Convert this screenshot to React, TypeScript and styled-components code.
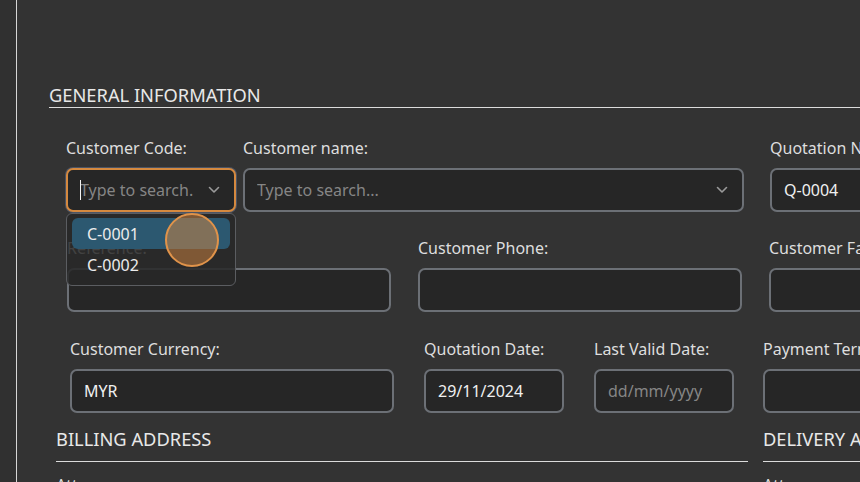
import React from "react"
import styled, { createGlobalStyle } from "styled-components"

const GlobalStyle = createGlobalStyle`
  html, body {
    margin: 0;
    padding: 0;
    background: #333333;
    font-family: "Noto Sans", "Open Sans", sans-serif;
  }
  * { box-sizing: border-box; }
`

const Page = styled.div`
  display: flex;
  width: 860px;
  height: 482px;
  overflow: hidden;
  background: #333333;
`

const SideStrip = styled.div`
  width: 17px;
  flex-shrink: 0;
  background: #303030;
  border-right: 1px solid #d6d6d6;
`

const Main = styled.div`
  flex: 1;
  min-width: 0;
  padding-top: 83px;
  position: relative;
`

const SectionTitle = styled.div<{ indent: number; gap: number }>`
  margin-left: ${({ indent }) => indent}px;
  padding-bottom: ${({ gap }) => gap}px;
  border-bottom: 1px solid #dcdcdc;
  color: #e8e8e8;
  font-size: 18.3px;
  line-height: 24px;
  white-space: nowrap;
`

const Row = styled.div<{ indent: number; top: number }>`
  display: flex;
  margin-left: ${({ indent }) => indent}px;
  margin-top: ${({ top }) => top}px;
`

const Field = styled.div<{ width: number; gap?: number }>`
  display: flex;
  flex-direction: column;
  gap: 10px;
  width: ${({ width }) => width}px;
  flex-shrink: 0;
  margin-right: ${({ gap }) => gap || 0}px;
  position: relative;
`

const Label = styled.div`
  color: #dedede;
  font-size: 16px;
  line-height: 20px;
  white-space: nowrap;
`

const Box = styled.div<{ focused?: boolean }>`
  display: flex;
  align-items: center;
  height: 44px;
  padding: 0 12px 0 12px;
  border-radius: 7px;
  background: #262626;
  border: 2px solid ${({ focused }) => (focused ? "#d5893f" : "#6c7076")};
  box-shadow: ${({ focused }) =>
    focused ? "0 0 0 1px rgba(96, 112, 140, 0.55)" : "none"};
  position: relative;
`

const TextInput = styled.input`
  flex: 1;
  min-width: 0;
  border: none;
  outline: none;
  background: transparent;
  color: #f0f0f0;
  font-family: "Noto Sans", "Open Sans", sans-serif;
  font-size: 16px;
  padding: 0;
  text-overflow: clip;
  &::placeholder {
    color: #858585;
  }
`

const Chevron = styled.svg`
  width: 12px;
  height: 8px;
  flex-shrink: 0;
  margin-left: 14px;
  margin-right: 2px;
`

const Caret = styled.span`
  position: absolute;
  left: 12px;
  top: 10px;
  width: 1px;
  height: 20px;
  background: #f2f2f2;
`

const Dropdown = styled.div`
  position: absolute;
  left: 0;
  top: 75px;
  width: 170px;
  height: 73px;
  padding: 4px 5px 0 5px;
  border: 1px solid #5b5d61;
  border-radius: 6px;
  background: rgba(40, 40, 40, 0.86);
  z-index: 5;
`

const Option = styled.div<{ active?: boolean }>`
  height: 31px;
  padding-left: 15px;
  display: flex;
  align-items: center;
  border-radius: 6px;
  color: #ececec;
  font-size: 16px;
  background: ${({ active }) => (active ? "#2c5870" : "transparent")};
`

const ClickMark = styled.div`
  position: absolute;
  left: 98px;
  top: -1px;
  width: 54px;
  height: 54px;
  border-radius: 50%;
  border: 2px solid #e0934a;
  background: rgba(214, 136, 66, 0.5);
  z-index: 6;
`

const AddressRow = styled.div`
  display: flex;
  margin-top: 14px;
  margin-left: 39px;
`

const AddressCol = styled.div<{ width: number; gap?: number }>`
  width: ${({ width }) => width}px;
  flex-shrink: 0;
  margin-right: ${({ gap }) => gap || 0}px;
`

const SubLabel = styled.div`
  margin-top: 13px;
  color: #dedede;
  font-size: 16px;
  line-height: 20px;
`

const ChevronIcon = () => (
  <Chevron viewBox="0 0 12 8">
    <path
      d="M1.5 1.5 L6 6 L10.5 1.5"
      fill="none"
      stroke="#9a9a9a"
      strokeWidth="1.6"
      strokeLinecap="round"
      strokeLinejoin="round"
    />
  </Chevron>
)

export default function App() {
  return (
    <>
      <GlobalStyle />
      <Page>
        <SideStrip />
        <Main>
          <SectionTitle indent={32} gap={0}>
            GENERAL INFORMATION
          </SectionTitle>

          <Row indent={49} top={30}>
            <Field width={170} gap={7}>
              <Label>Customer Code:</Label>
              <Box focused>
                <Caret />
                <TextInput placeholder="Type to search..." readOnly />
                <ChevronIcon />
              </Box>
              <Dropdown>
                <Option active>C-0001</Option>
                <Option>C-0002</Option>
                <ClickMark />
              </Dropdown>
            </Field>
            <Field width={501} gap={26}>
              <Label>Customer name:</Label>
              <Box>
                <TextInput placeholder="Type to search..." readOnly />
                <ChevronIcon />
              </Box>
            </Field>
            <Field width={220}>
              <Label>Quotation No:</Label>
              <Box>
                <TextInput value="Q-0004" readOnly />
              </Box>
            </Field>
          </Row>

          <Row indent={50} top={26}>
            <Field width={324} gap={27}>
              <Label>Reference:</Label>
              <Box>
                <TextInput readOnly />
              </Box>
            </Field>
            <Field width={324} gap={27}>
              <Label>Customer Phone:</Label>
              <Box>
                <TextInput readOnly />
              </Box>
            </Field>
            <Field width={220}>
              <Label>Customer Fax:</Label>
              <Box>
                <TextInput readOnly />
              </Box>
            </Field>
          </Row>

          <Row indent={53} top={27}>
            <Field width={324} gap={30}>
              <Label>Customer Currency:</Label>
              <Box>
                <TextInput value="MYR" readOnly />
              </Box>
            </Field>
            <Field width={140} gap={30}>
              <Label>Quotation Date:</Label>
              <Box>
                <TextInput value="29/11/2024" readOnly />
              </Box>
            </Field>
            <Field width={140} gap={29}>
              <Label>Last Valid Date:</Label>
              <Box>
                <TextInput placeholder="dd/mm/yyyy" readOnly />
              </Box>
            </Field>
            <Field width={220}>
              <Label>Payment Terms:</Label>
              <Box>
                <TextInput readOnly />
              </Box>
            </Field>
          </Row>

          <AddressRow>
            <AddressCol width={692} gap={15}>
              <SectionTitle indent={0} gap={10}>
                BILLING ADDRESS
              </SectionTitle>
              <SubLabel>Attn:</SubLabel>
            </AddressCol>
            <AddressCol width={400}>
              <SectionTitle indent={0} gap={10}>
                DELIVERY ADDRESS
              </SectionTitle>
              <SubLabel>Attn:</SubLabel>
            </AddressCol>
          </AddressRow>
        </Main>
      </Page>
    </>
  )
}
